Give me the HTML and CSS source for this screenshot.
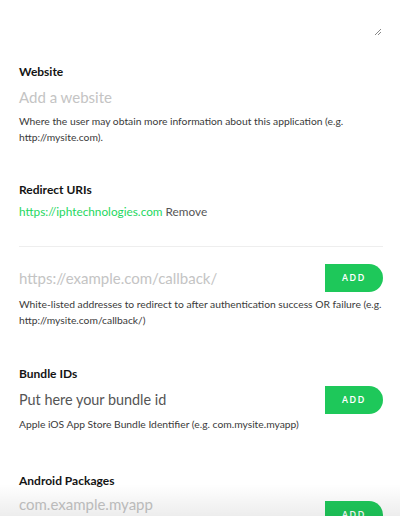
FILE: index.html
```html
<!DOCTYPE html>
<html>
<head>
<meta charset="utf-8">
<link rel="stylesheet" href="styles.css">
</head>
<body>
<div class="page">
  <div class="textarea-end">
    <svg class="grip" width="8" height="8" viewBox="0 0 8 8"><path d="M7 1L1 7M7 4L4 7" stroke="#888" stroke-width="1" fill="none"/></svg>
  </div>

  <section class="field website">
    <h3 class="label">Website</h3>
    <div class="input placeholder">Add a website</div>
    <p class="help">Where the user may obtain more information about this application (e.g. http://mysite.com).</p>
  </section>

  <section class="field redirect">
    <h3 class="label">Redirect URIs</h3>
    <div class="uri"><span class="link">https://iphtechnologies.com</span> <span class="remove">Remove</span></div>
    <hr class="divider">
    <div class="row">
      <div class="input placeholder">https://example.com/callback/</div>
      <button class="add">ADD</button>
    </div>
    <p class="help">White-listed addresses to redirect to after authentication success OR failure (e.g. http://mysite.com/callback/)</p>
  </section>

  <section class="field bundle">
    <h3 class="label">Bundle IDs</h3>
    <div class="row">
      <div class="input filled">Put here your bundle id</div>
      <button class="add">ADD</button>
    </div>
    <p class="help">Apple iOS App Store Bundle Identifier (e.g. com.mysite.myapp)</p>
  </section>

  <section class="field android">
    <h3 class="label">Android Packages</h3>
    <div class="row">
      <div class="input placeholder">com.example.myapp</div>
      <button class="add">ADD</button>
    </div>
  </section>
</div>
<div class="fade"></div>
</body>
</html>
```
FILE: styles.css
```css
* { box-sizing: border-box; }
html, body { margin: 0; padding: 0; background: #fff; }
body {
  width: 400px;
  height: 516px;
  overflow: hidden;
  position: relative;
  font-family: Lato, "Open Sans", sans-serif;
  color: #222;
}
.page { padding: 0 17px 0 19px; }
.textarea-end {
  height: 36px;
  display: flex;
  justify-content: flex-end;
  align-items: flex-end;
  padding-right: 1px;
}
.grip { display: block; }
.field { margin: 0; }
.label {
  margin: 0;
  font-size: 12px;
  font-weight: 700;
  line-height: 16px;
  color: #141414;
}
.website { padding-top: 28px; }
.input {
  font-size: 15px;
  line-height: 22px;
  flex: 1;
}
.placeholder { color: #c4c4c4; }
.filled { color: #555; font-size: 14.4px; }
.website .input { margin-top: 6px; }
.help {
  margin: 0 -4px 0 0;
  font-size: 10.3px;
  line-height: 16px;
  color: #3a3a3a;
}
.website .help { margin-top: 5px; }
.redirect { padding-top: 37px; }
.uri {
  margin-top: 5px;
  font-size: 11.8px;
  line-height: 18px;
}
.link { color: #1ed760; }
.remove { color: #555; }
.divider {
  border: 0;
  border-top: 1px solid #eeeeee;
  margin: 25px 0 0;
}
.row {
  display: flex;
  align-items: center;
  gap: 10px;
}
.redirect .row { margin-top: 17px; }
.add {
  width: 58px;
  height: 28px;
  border: 0;
  background: #1ec85a;
  color: #fff;
  font-family: Lato, sans-serif;
  font-weight: 700;
  font-size: 8.5px;
  letter-spacing: 1.8px;
  border-radius: 0 14px 14px 0;
  padding: 0;
}
.redirect .help { margin-top: 5px; line-height: 15.5px; }
.bundle { padding-top: 38px; }
.bundle .row { margin-top: 4px; }
.bundle .help { margin-top: 2px; }
.android { padding-top: 41px; }
.android .row { margin-top: 4px; align-items: flex-start; }
.android .add { margin-top: 8px; }
.fade {
  position: absolute;
  left: 0;
  right: 0;
  bottom: 0;
  height: 32px;
  background: linear-gradient(to bottom, rgba(0,0,0,0), rgba(0,0,0,0.07));
  pointer-events: none;
}
```
